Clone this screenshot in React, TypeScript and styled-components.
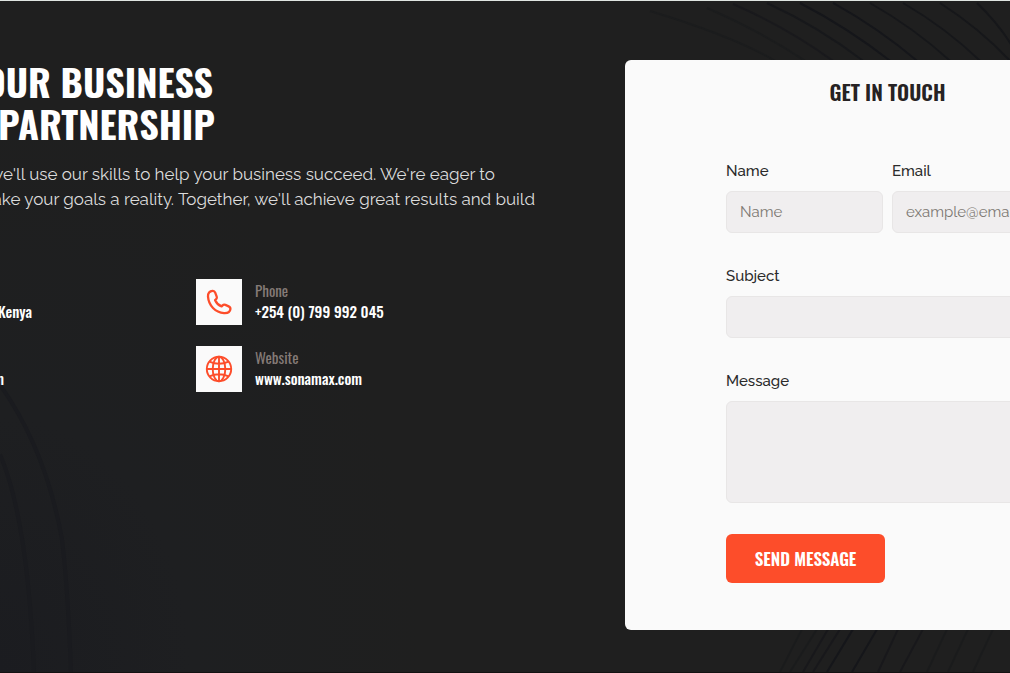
import React from "react";
import styled, { createGlobalStyle } from "styled-components";

const display = `Oswald, "Liberation Sans Narrow", sans-serif`;
const body = `Raleway, Lato, sans-serif`;

const GlobalStyle = createGlobalStyle`
  *, *::before, *::after { box-sizing: border-box; }
  body { margin: 0; background: #1f1f1f; font-family: ${body}; }
  h1, h2, p { margin: 0; }
`;

const Page = styled.main`
  position: relative;
  min-height: 100vh;
  overflow: hidden;
  background: radial-gradient(ellipse 42% 85% at 0 100%, #1b1c20 0%, #1e1f21 45%, #1f1f1f 100%);
  background-color: #1f1f1f;
  border-top: 1px solid #dfe5e1;
  border-bottom: 1px solid #141212;
`;

const Waves = styled.svg`
  position: absolute;
  inset: 0;
  width: 100%;
  height: 100%;
`;

const Columns = styled.div`
  position: relative;
  display: grid;
  grid-template-columns: 1fr 525px;
  align-items: start;
  margin-right: -140px;
  padding: 59px 0 42px;
`;

const Intro = styled.section`
  min-width: 0;
`;

const Heading = styled.h1`
  font: 700 38px/42px ${display};
  color: #fff;
  text-transform: uppercase;
`;

const Line = styled.span<{ $end: number }>`
  display: flex;
  justify-content: flex-end;
  width: ${(p) => p.$end}px;
  white-space: nowrap;
`;

const Lead = styled.p`
  margin-top: 18px;
  font: 400 17px/25px ${body};
  color: #dcdcdc;
`;

const Contacts = styled.div`
  display: grid;
  grid-template-columns: 196px 1fr;
  row-gap: 21px;
  margin-top: 67px;
`;

const Contact = styled.div`
  display: flex;
  gap: 13px;
  height: 46px;
`;

const ClippedContact = styled.div<{ $end: number }>`
  display: flex;
  flex-direction: column;
  align-items: flex-end;
  width: ${(p) => p.$end}px;
  height: 46px;
  padding-top: 22px;
`;

const IconTile = styled.span`
  display: grid;
  place-items: center;
  width: 46px;
  height: 46px;
  background: #fafafa;
  color: #fd4d2a;
`;

const ContactText = styled.div`
  padding-top: 1px;
`;

const ContactLabel = styled.div`
  font: 400 15px/21px ${display};
  color: #857b77;
`;

const ContactValue = styled.div`
  font: 500 15px/21px ${display};
  color: #fff;
  white-space: nowrap;
`;

const ContactLink = styled.a`
  color: inherit;
  text-decoration: none;
`;

const Card = styled.section`
  padding: 15px 101px 47px;
  border-radius: 6px;
  background: #fafafa;
`;

const CardTitle = styled.h2`
  font: 600 21px/34px ${display};
  color: #262223;
  text-align: center;
  text-transform: uppercase;
`;

const Form = styled.form`
  display: grid;
  grid-template-columns: 1fr 1fr;
  gap: 31px 9px;
  margin-top: 50px;
`;

const Field = styled.div<{ $wide?: boolean }>`
  display: flex;
  flex-direction: column;
  gap: 8px;
  min-width: 0;
  grid-column: ${(p) => (p.$wide ? "1 / -1" : "auto")};
`;

const Label = styled.label`
  font: 500 15px/24px ${body};
  color: #2b2b2b;
`;

const Input = styled.input`
  width: 100%;
  height: 42px;
  padding: 0 13px;
  border: 1px solid #e8e6e6;
  border-radius: 6px;
  background: #f0eeef;
  font: 400 15px/20px ${body};
  color: #2b2b2b;
  &::placeholder { color: #7c7872; opacity: 1; }
`;

const TextArea = styled(Input).attrs({ as: "textarea" })`
  display: block;
  height: 102px;
  padding: 10px 13px;
  resize: none;
`;

const Submit = styled.button`
  justify-self: start;
  grid-column: 1 / -1;
  width: 159px;
  height: 49px;
  padding: 0;
  border: 0;
  border-radius: 6px;
  background: #fd4d2a;
  font: 600 17px/24px ${display};
  color: #fff;
  text-transform: uppercase;
`;

const PhoneIcon = () => (
  <svg width="26" height="26" viewBox="0 0 26 26" fill="none" stroke="currentColor" strokeWidth="2.3" strokeLinejoin="round" aria-hidden="true">
    <path d="M6.6 1.9C3.6 2.1 1.7 4.3 2 7.7C2.7 16.6 9.3 23.5 18 24.1C21.6 24.3 24.1 22.9 24.4 20.2C24.6 18.8 24 18 22.7 17.4L19.4 15.9C18.3 15.4 17.4 15.6 16.6 16.4L15.6 17.4C12.8 16.3 10.4 14 9.1 11.2L10.2 10.2C11 9.4 11.1 8.6 10.7 7.6L9.2 3.7C8.7 2.4 7.9 1.8 6.6 1.9Z" />
  </svg>
);

const GlobeIcon = () => (
  <svg width="28" height="28" viewBox="0 0 28 28" fill="none" stroke="currentColor" strokeWidth="1.9" aria-hidden="true">
    <circle cx="14" cy="14" r="12.2" />
    <ellipse cx="14" cy="14" rx="6.3" ry="12.2" />
    <path d="M14 1.8V26.2M1.8 14H26.2M4.4 6.6Q14 10.8 23.6 6.6M4.4 21.4Q14 17.2 23.6 21.4" />
  </svg>
);

const Backdrop = () => (
  <Waves viewBox="0 0 1010 673" preserveAspectRatio="none" fill="none" aria-hidden="true">
    <g stroke="#15161a" strokeWidth="2">
      <path d="M650 10Q735 36 775 60M707 7Q762 31 805 60" opacity=".35" />
      <path d="M733 3Q786 26 833 60" opacity=".6" />
      <path d="M767 2Q819 26 863 60" opacity=".8" />
      <path d="M800 2Q848 27 890 60M833 2Q878 27 917 60" />
      <path d="M870 2Q914 27 950 60M903 2Q946 27 980 60" opacity=".9" />
      <path d="M940 2Q979 27 1010 60M977 2Q998 22 1012 45" opacity=".9" />
      <path d="M802 630L780 673M817 630L790 673" opacity=".4" />
      <path d="M828 630L803 673M840 630L813 673" opacity=".7" />
      <path d="M853 630L827 673M877 630L852 673" />
      <path d="M898 630L878 673M923 630L900 673" opacity=".7" />
      <path d="M947 630L927 673M968 630L948 673M993 630L973 673" opacity=".4" />
    </g>
    <g stroke="#1a1b1f" strokeWidth="4" opacity=".8">
      <path d="M0 385Q46 450 62 540Q68 590 71 673" />
      <path d="M0 455Q28 520 34 673" />
    </g>
  </Waves>
);

export default function App() {
  return (
    <Page>
      <GlobalStyle />
      <Backdrop />
      <Columns>
        <Intro>
          <Heading>
            <Line $end={213}>our Business</Line>
            <Line $end={215}>Partnership</Line>
          </Heading>
          <Lead>
            <Line $end={495}>we'll use our skills to help your business succeed. We're eager to</Line>
            <Line $end={535}>ake your goals a reality. Together, we'll achieve great results and build</Line>
          </Lead>
          <Contacts>
            <ClippedContact $end={32}>
              <ContactValue>Kenya</ContactValue>
            </ClippedContact>
            <Contact>
              <IconTile><PhoneIcon /></IconTile>
              <ContactText>
                <ContactLabel>Phone</ContactLabel>
                <ContactValue>+254 (0) 799 992 045</ContactValue>
              </ContactText>
            </Contact>
            <ClippedContact $end={4}>
              <ContactValue>m</ContactValue>
            </ClippedContact>
            <Contact>
              <IconTile><GlobeIcon /></IconTile>
              <ContactText>
                <ContactLabel>Website</ContactLabel>
                <ContactValue><ContactLink href="#website">www.sonamax.com</ContactLink></ContactValue>
              </ContactText>
            </Contact>
          </Contacts>
        </Intro>
        <Card>
          <CardTitle>Get in touch</CardTitle>
          <Form onSubmit={(e) => e.preventDefault()}>
            <Field>
              <Label htmlFor="name">Name</Label>
              <Input id="name" placeholder="Name" />
            </Field>
            <Field>
              <Label htmlFor="email">Email</Label>
              <Input id="email" type="email" placeholder="example@email.com" />
            </Field>
            <Field $wide>
              <Label htmlFor="subject">Subject</Label>
              <Input id="subject" />
            </Field>
            <Field $wide>
              <Label htmlFor="message">Message</Label>
              <TextArea id="message" />
            </Field>
            <Submit type="submit">Send Message</Submit>
          </Form>
        </Card>
      </Columns>
    </Page>
  );
}
